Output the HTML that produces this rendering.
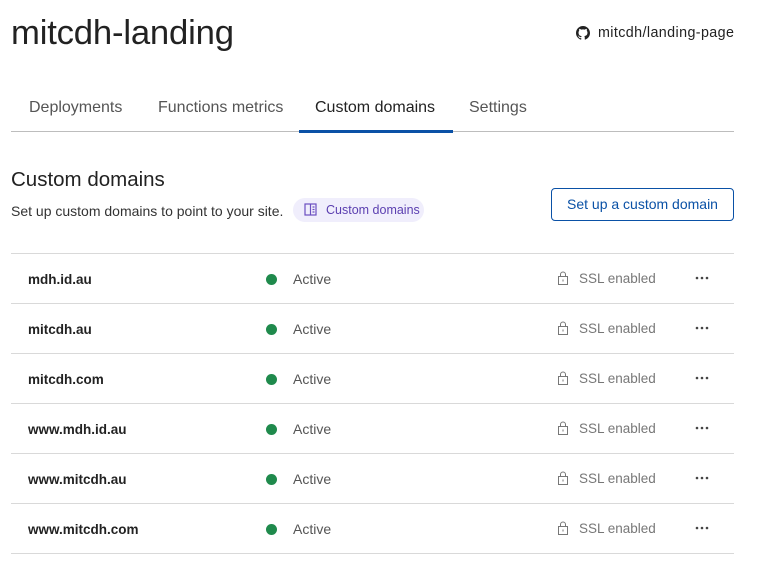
<!DOCTYPE html>
<html><head><meta charset="utf-8"><style>
*{margin:0;padding:0;box-sizing:border-box}
html,body{width:758px;height:581px;overflow:hidden}
body{background:#fff;font-family:"Liberation Sans",sans-serif;color:#313131;position:relative}
.abs{position:absolute;white-space:nowrap}
h1{position:absolute;left:11px;top:14px;font-size:34.7px;font-weight:normal;color:#222;letter-spacing:-0.2px}
.repo{position:absolute;left:576px;top:25px;font-size:14.3px;color:#222;display:flex;align-items:center;gap:8px;letter-spacing:0.4px}
.tab{position:absolute;top:99px;font-size:16px;color:#555}
.line{position:absolute;left:11px;width:723px;height:1px;background:#d9d9d9}
.row{position:absolute;left:11px;width:723px;height:50px;font-size:14px}
.row .d{position:absolute;left:17px;top:18px;font-weight:bold;color:#222;font-size:13.5px}
.row .dot{position:absolute;left:255px;top:20px;width:11px;height:11px;border-radius:50%;background:#1f8a4c}
.row .a{position:absolute;left:282px;top:17px;color:#555}
.row .s{position:absolute;left:568px;top:17px;color:#777;font-size:13.5px}
.row .m{position:absolute;left:684px;top:22px}
</style></head><body>
<h1>mitcdh-landing</h1>
<div class="repo"><svg width="14" height="14" viewBox="0 0 16 16"><path fill="#222" d="M8 0C3.6 0 0 3.6 0 8c0 3.5 2.3 6.5 5.5 7.6.4.1.5-.2.5-.4v-1.4c-2.2.5-2.7-1-2.7-1-.4-.9-.9-1.200-.9-1.2-.7-.5.1-.5.1-.5.8.1 1.2.8 1.2.8.7 1.3 1.900.9 2.300.7.1-.5.3-.9.5-1.1-1.8-.2-3.6-.9-3.6-4 0-.9.3-1.6.8-2.1-.1-.2-.4-1 .1-2.1 0 0 .7-.2 2.2.8.6-.2 1.3-.3 2-.3s1.4.1 2 .3c1.5-1 2.2-.8 2.2-.8.4 1.1.2 1.9.1 2.1.5.6.8 1.3.8 2.1 0 3.1-1.9 3.7-3.6 3.9.3.3.5.8.5 1.5v2.2c0 .2.1.5.6.4C13.7 14.5 16 11.5 16 8c0-4.4-3.6-8-8-8z"/></svg>mitcdh/landing-page</div>
<div class="tab" style="left:29px">Deployments</div>
<div class="tab" style="left:158px">Functions metrics</div>
<div class="tab" style="left:315px;color:#222">Custom domains</div>
<div class="tab" style="left:469px">Settings</div>
<div class="line" style="top:131px;background:#bdbdbd"></div>
<div class="abs" style="left:299px;top:130px;width:154px;height:3px;background:#0a51a6"></div>
<div class="abs" style="left:11px;top:168px;font-size:20.5px;color:#222">Custom domains</div>
<div class="abs" style="left:11px;top:203px;font-size:14px;color:#333">Set up custom domains to point to your site.</div>
<div class="abs" style="left:293px;top:198px;width:131px;height:24px;border-radius:12px;background:#f0eefc;font-size:12.5px;color:#5b3fb0;padding:5px 0 0 33px">Custom domains
<svg style="position:absolute;left:11px;top:5px" width="13" height="13" viewBox="0 0 13 13" fill="none" stroke="#6b4fc0" stroke-width="1.2"><rect x="1" y="1" width="11" height="11"/><path d="M6.5 1v11M8.5 4h2M8.5 6.5h2M8.5 9h2"/></svg></div>
<div class="abs" style="left:551px;top:188px;width:183px;height:33px;border:1px solid #0a51a6;border-radius:4px;color:#0a51a6;font-size:14px;text-align:center;line-height:31px">Set up a custom domain</div>
<div class="line" style="top:253px"></div>
<div class="row" style="top:254px"><span class="d">mdh.id.au</span><span class="dot"></span><span class="a">Active</span><span class="s">SSL enabled</span><svg class="m" width="14" height="4"><circle cx="2" cy="2" r="1.3" fill="#444"/><circle cx="7" cy="2" r="1.3" fill="#444"/><circle cx="12" cy="2" r="1.3" fill="#444"/></svg></div>
<div class="line" style="top:303px"></div>
<div class="row" style="top:304px"><span class="d">mitcdh.au</span><span class="dot"></span><span class="a">Active</span><span class="s">SSL enabled</span><svg class="m" width="14" height="4"><circle cx="2" cy="2" r="1.3" fill="#444"/><circle cx="7" cy="2" r="1.3" fill="#444"/><circle cx="12" cy="2" r="1.3" fill="#444"/></svg></div>
<div class="line" style="top:353px"></div>
<div class="row" style="top:354px"><span class="d">mitcdh.com</span><span class="dot"></span><span class="a">Active</span><span class="s">SSL enabled</span><svg class="m" width="14" height="4"><circle cx="2" cy="2" r="1.3" fill="#444"/><circle cx="7" cy="2" r="1.3" fill="#444"/><circle cx="12" cy="2" r="1.3" fill="#444"/></svg></div>
<div class="line" style="top:403px"></div>
<div class="row" style="top:404px"><span class="d">www.mdh.id.au</span><span class="dot"></span><span class="a">Active</span><span class="s">SSL enabled</span><svg class="m" width="14" height="4"><circle cx="2" cy="2" r="1.3" fill="#444"/><circle cx="7" cy="2" r="1.3" fill="#444"/><circle cx="12" cy="2" r="1.3" fill="#444"/></svg></div>
<div class="line" style="top:453px"></div>
<div class="row" style="top:454px"><span class="d">www.mitcdh.au</span><span class="dot"></span><span class="a">Active</span><span class="s">SSL enabled</span><svg class="m" width="14" height="4"><circle cx="2" cy="2" r="1.3" fill="#444"/><circle cx="7" cy="2" r="1.3" fill="#444"/><circle cx="12" cy="2" r="1.3" fill="#444"/></svg></div>
<div class="line" style="top:503px"></div>
<div class="row" style="top:504px"><span class="d">www.mitcdh.com</span><span class="dot"></span><span class="a">Active</span><span class="s">SSL enabled</span><svg class="m" width="14" height="4"><circle cx="2" cy="2" r="1.3" fill="#444"/><circle cx="7" cy="2" r="1.3" fill="#444"/><circle cx="12" cy="2" r="1.3" fill="#444"/></svg></div>
<div class="line" style="top:553px"></div>
<svg style="position:absolute;left:557px;top:271px" width="12" height="270" viewBox="0 0 12 270" fill="none" stroke="#777" stroke-width="1">
<g><rect x="1.5" y="5.5" width="9" height="8"/><path d="M3.5 5.5V3.5a2.5 2.5 0 0 1 5 0v2M6 8.5v2"/></g>
<g transform="translate(0,50)"><rect x="1.5" y="5.5" width="9" height="8"/><path d="M3.5 5.5V3.5a2.5 2.5 0 0 1 5 0v2M6 8.5v2"/></g>
<g transform="translate(0,100)"><rect x="1.5" y="5.5" width="9" height="8"/><path d="M3.5 5.5V3.5a2.5 2.5 0 0 1 5 0v2M6 8.5v2"/></g>
<g transform="translate(0,150)"><rect x="1.5" y="5.5" width="9" height="8"/><path d="M3.5 5.5V3.5a2.5 2.5 0 0 1 5 0v2M6 8.5v2"/></g>
<g transform="translate(0,200)"><rect x="1.5" y="5.5" width="9" height="8"/><path d="M3.5 5.5V3.5a2.5 2.5 0 0 1 5 0v2M6 8.5v2"/></g>
<g transform="translate(0,250)"><rect x="1.5" y="5.5" width="9" height="8"/><path d="M3.5 5.5V3.5a2.5 2.5 0 0 1 5 0v2M6 8.5v2"/></g>
</svg>
</body></html>
